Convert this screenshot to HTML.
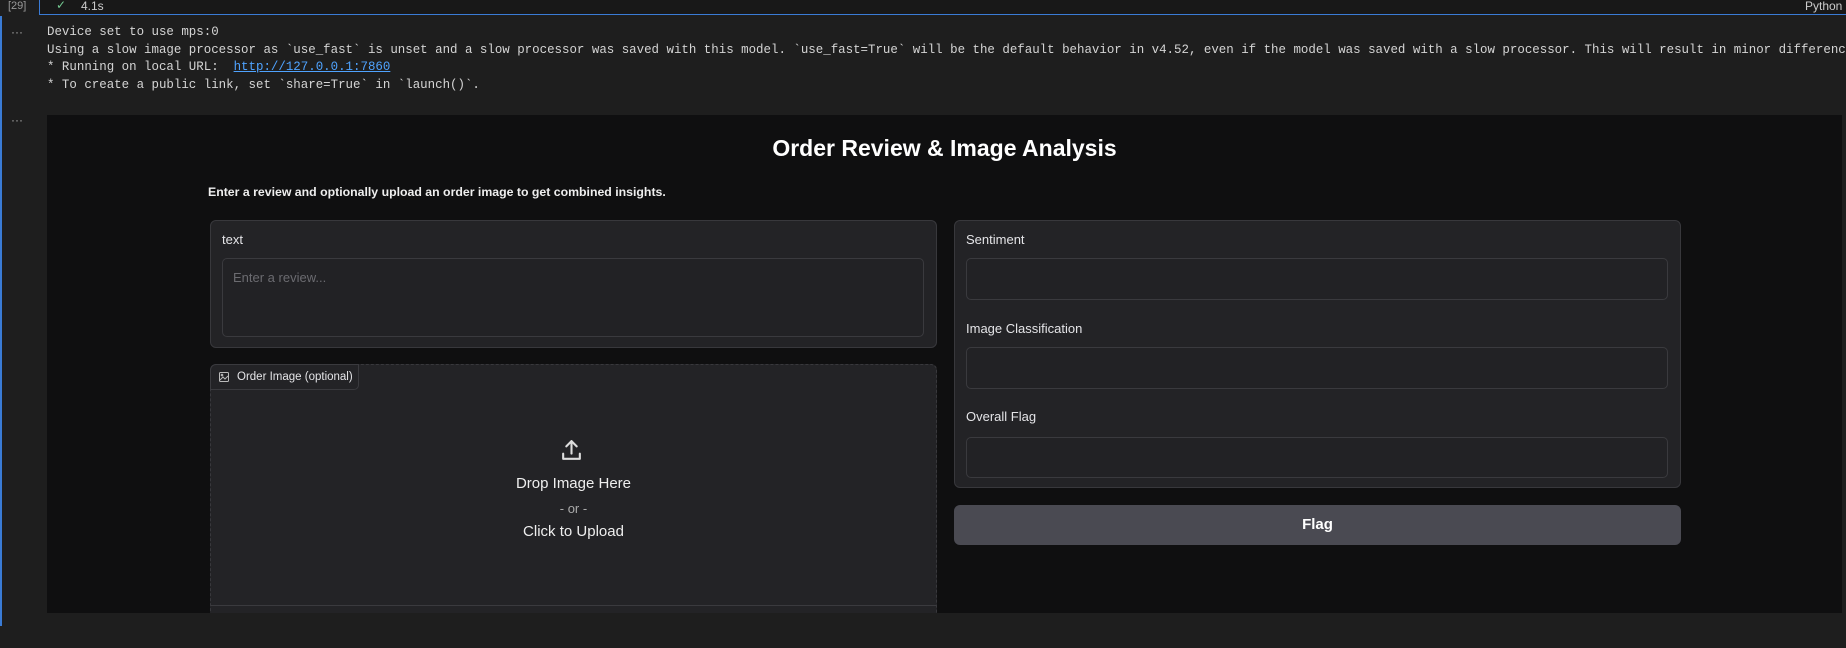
<!DOCTYPE html>
<html><head><meta charset="utf-8"><style>
*{box-sizing:border-box;margin:0;padding:0}
body{width:1846px;height:648px;background:#1e1e1e;position:relative;overflow:hidden;font-family:"Liberation Sans",sans-serif;color:#e8e8e8}
.abs{position:absolute}
.mono{font-family:"Liberation Mono",monospace;font-size:12.45px;color:#d4d4d4;white-space:pre;line-height:17.7px;width:1799px;overflow:hidden}
.panel{position:absolute;background:#232326;border:1px solid #38383c;border-radius:6px}
.box{position:absolute;background:#222225;border:1px solid #3a3a3e;border-radius:5px}
.lbl{position:absolute;font-size:13px;color:#e4e4e7}
</style></head><body>
<div class="abs" style="left:0;top:0;width:1846px;height:15px;background:#181818;border-bottom:1px solid #3a7bd5"></div>
<div class="abs" style="left:0;top:0;width:40px;height:16px;background:#1e1e1e"></div>
<div class="abs" style="left:39px;top:0;width:1px;height:15px;background:#3a7bd5"></div>
<div class="abs" style="left:8px;top:0;font-size:11px;color:#999;line-height:12px">[29]</div>
<div class="abs" style="left:56px;top:-1px;font-size:12px;color:#73c991;line-height:13px">✓</div>
<div class="abs" style="left:81px;top:0;font-size:12px;color:#ccc;line-height:12px">4.1s</div>
<div class="abs" style="left:1805px;top:0;font-size:12px;color:#ccc;line-height:12px">Python</div>
<div class="abs" style="left:0;top:16px;width:2px;height:610px;background:#3a7bd5"></div>
<div class="abs" style="left:11px;top:25px;font-size:12px;color:#aaa">···</div>
<div class="abs" style="left:11px;top:113px;font-size:12px;color:#aaa">···</div>
<div class="abs mono" style="left:47px;top:24px">Device set to use mps:0
Using a slow image processor as `use_fast` is unset and a slow processor was saved with this model. `use_fast=True` will be the default behavior in v4.52, even if the model was saved with a slow processor. This will result in minor differences in outputs
* Running on local URL:  <span style="color:#4fa3ff;text-decoration:underline">http://127.0.0.1:7860</span>
* To create a public link, set `share=True` in `launch()`.</div>
<div class="abs" style="left:47px;top:115px;width:1795px;height:498px;background:#0f0f10;overflow:hidden">
<div class="abs" style="left:0;top:20px;width:1795px;text-align:center;font-size:23px;font-weight:bold;color:#fff">Order Review &amp; Image Analysis</div>
<div class="abs" style="left:161px;top:70px;font-size:12.3px;font-weight:bold;color:#eee">Enter a review and optionally upload an order image to get combined insights.</div>

<div class="panel" style="left:163px;top:105px;width:727px;height:128px"></div>
<div class="lbl" style="left:175px;top:117px">text</div>
<div class="box" style="left:175px;top:143px;width:702px;height:79px"></div>
<div class="abs" style="left:186px;top:155px;font-size:13px;color:#6b6b70">Enter a review...</div>

<div class="panel" style="left:163px;top:249px;width:727px;height:280px;border-style:dashed;border-radius:6px 6px 0 0"></div>
<div class="abs" style="left:163px;top:249px;width:149px;height:26px;border:1px solid #3a3a3e;border-radius:6px 0 5px 0;background:#232326"></div>
<svg class="abs" style="left:171px;top:256px" width="12" height="12" viewBox="0 0 12 12" fill="none" stroke="#bbb" stroke-width="1"><rect x="1.5" y="1.5" width="9" height="9" rx="1"/><path d="M2 9l3-3 2 2 3-3"/><circle cx="4" cy="4" r=".8"/></svg>
<div class="abs" style="left:190px;top:256px;font-size:11.5px;color:#e4e4e7">Order Image (optional)</div>
<svg class="abs" style="left:512px;top:323px" width="25" height="25" viewBox="0 0 24 24" fill="none" stroke="#ddd" stroke-width="2" stroke-linecap="round" stroke-linejoin="round"><path d="M4 15v5h16v-5"/><path d="M12 15V3"/><path d="M7 8l5-5 5 5"/></svg>
<div class="abs" style="left:163px;top:360px;width:727px;text-align:center;font-size:15px;color:#eee">Drop Image Here</div>
<div class="abs" style="left:163px;top:386px;width:727px;text-align:center;font-size:13px;color:#aaa">- or -</div>
<div class="abs" style="left:163px;top:408px;width:727px;text-align:center;font-size:15px;color:#eee">Click to Upload</div>
<div class="abs" style="left:164px;top:490px;width:725px;height:1px;background:#3a3a3e"></div>

<div class="panel" style="left:907px;top:105px;width:727px;height:268px"></div>
<div class="lbl" style="left:919px;top:117px">Sentiment</div>
<div class="box" style="left:919px;top:143px;width:702px;height:42px"></div>
<div class="lbl" style="left:919px;top:206px">Image Classification</div>
<div class="box" style="left:919px;top:232px;width:702px;height:42px"></div>
<div class="lbl" style="left:919px;top:294px">Overall Flag</div>
<div class="box" style="left:919px;top:322px;width:702px;height:41px"></div>
<div class="abs" style="left:907px;top:390px;width:727px;height:40px;background:#4a4a52;border-radius:6px;text-align:center;line-height:40px;font-size:15px;font-weight:bold;color:#fff">Flag</div>
</div>
</body></html>
